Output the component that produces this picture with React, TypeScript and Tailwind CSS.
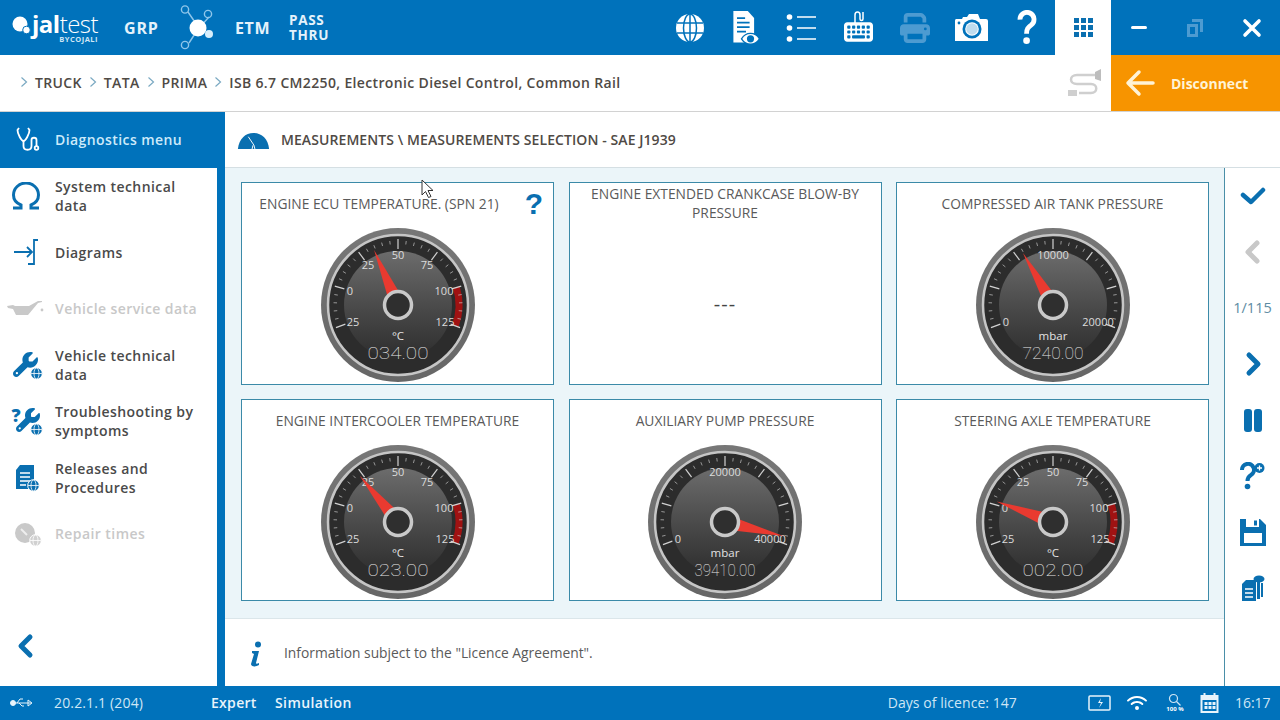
import { FaKeyboard, FaPrint, FaWifi, FaWrench } from "react-icons/fa6";

type GaugeProps = {
  id: string;
  labels: { text: string; x: number; y: number }[];
  angle: number;
  unit: string;
  value: string;
  redZone?: boolean;
};

const polar = (r: number, deg: number) => {
  const a = ((deg - 90) * Math.PI) / 180;
  return { x: 80 + r * Math.cos(a), y: 80 + r * Math.sin(a) };
};

function Gauge({ id, labels, angle, unit, value, redZone }: GaugeProps) {
  const ticks = Array.from({ length: 31 }, (_, i) => i);
  const zoneA = polar(61, 73);
  const zoneB = polar(61, 110);
  const tip = polar(60, angle);
  const baseL = polar(12, angle - 32);
  const baseR = polar(12, angle + 32);
  return (
    <svg width="160" height="160" viewBox="0 0 160 160" className="block">
      <defs>
        <linearGradient id={`${id}-ring`} x1="0" y1="0" x2="0" y2="1">
          <stop offset="0" stopColor="#777" />
          <stop offset="1" stopColor="#666" />
        </linearGradient>
        <linearGradient id={`${id}-disc`} x1="0" y1="0" x2="0" y2="1">
          <stop offset="0" stopColor="#6c6c6c" />
          <stop offset="0.55" stopColor="#484848" />
          <stop offset="1" stopColor="#2d2d2d" />
        </linearGradient>
      </defs>
      <circle cx="80" cy="80" r="77" fill={`url(#${id}-ring)`} />
      <circle cx="80" cy="80" r="70" fill="#2c2c2c" stroke="#c6c6c6" strokeWidth="2.500" />
      <circle cx="80" cy="80" r="54" fill={`url(#${id}-disc)`} />
      {redZone ? (
        <path
          d={`M${zoneA.x} ${zoneA.y} A61 61 0 0 1 ${zoneB.x} ${zoneB.y}`}
          fill="none"
          stroke="#a01212"
          strokeWidth="7"
        />
      ) : null}
      {ticks.map((i) => {
        const deg = -110 + (i * 220) / 30;
        const major = i % 5 === 0;
        const a = polar(major ? 56 : 61, deg);
        const b = polar(major ? 66 : 64.500, deg);
        return (
          <line
            key={i}
            x1={a.x}
            y1={a.y}
            x2={b.x}
            y2={b.y}
            stroke="#d2d2d2"
            strokeWidth={major ? 1.200 : 1}
            opacity={major ? 1 : 0.65}
          />
        );
      })}
      {labels.map((l) => (
        <text key={l.text + l.x} x={l.x} y={l.y} textAnchor="middle" fill="#dcdcdc" className="text-[11px]">
          {l.text}
        </text>
      ))}
      <polygon points={`${baseL.x},${baseL.y} ${baseR.x},${baseR.y} ${tip.x},${tip.y}`} fill="#e93a30" />
      <circle cx="80" cy="80" r="13.500" fill="#2f2f2f" stroke="#c9c9c9" strokeWidth="3.500" />
      <text x="80" y="115" textAnchor="middle" fill="#e2e2e2" className="text-[11.500px]">
        {unit}
      </text>
      <text
        x="80"
        y="134"
        textAnchor="middle"
        textLength={61}
        lengthAdjust="spacingAndGlyphs"
        fill="#e6e6e6"
        className="font-['Roboto'] text-[16px] font-thin"
      >
        {value}
      </text>
    </svg>
  );
}

const tempLabels = [
  { text: "25", x: 35, y: 101 },
  { text: "0", x: 32, y: 70 },
  { text: "25", x: 50, y: 44 },
  { text: "50", x: 80, y: 34 },
  { text: "75", x: 109, y: 44 },
  { text: "100", x: 126, y: 70 },
  { text: "125", x: 127, y: 101 },
];

const cards = [
  { title: "ENGINE ECU TEMPERATURE. (SPN 21)", labels: tempLabels, angle: -23.500, unit: "°C", value: "034.00", red: true, help: true },
  { title: "ENGINE EXTENDED CRANKCASE BLOW-BY PRESSURE" },
  {
    title: "COMPRESSED AIR TANK PRESSURE",
    labels: [
      { text: "0", x: 33, y: 101 },
      { text: "10000", x: 80, y: 34 },
      { text: "20000", x: 125, y: 101 },
    ],
    angle: -30,
    unit: "mbar",
    value: "7240.00",
  },
  { title: "ENGINE INTERCOOLER TEMPERATURE", labels: tempLabels, angle: -39.600, unit: "°C", value: "023.00", red: true },
  {
    title: "AUXILIARY PUMP PRESSURE",
    labels: [
      { text: "0", x: 33, y: 101 },
      { text: "20000", x: 80, y: 34 },
      { text: "40000", x: 125, y: 101 },
    ],
    angle: 103.500,
    unit: "mbar",
    value: "39410.00",
  },
  { title: "STEERING AXLE TEMPERATURE", labels: tempLabels, angle: -70, unit: "°C", value: "002.00", red: true },
];

function GlobeIcon() {
  return (
    <svg width="30" height="30" viewBox="0 0 30 30" fill="none" stroke="#0072bb" strokeWidth="1.500">
      <circle cx="15" cy="15" r="14" fill="#fff" stroke="none" />
      <ellipse cx="15" cy="15" rx="6.500" ry="14" />
      <path d="M2 10h26M2 20h26M15 1v28" />
    </svg>
  );
}

function DocEyeIcon() {
  return (
    <svg width="32" height="36" viewBox="0 0 32 40">
      <path d="M2 1h16l7 8v27H2z" fill="#fff" />
      <path d="M6 9h9M6 14h14M6 19h14M6 24h10" stroke="#0072bb" strokeWidth="2" />
      <path d="M11 32c5-8 15-8 20 0-5 8-15 8-20 0z" fill="#fff" stroke="#0072bb" strokeWidth="1.500" />
      <circle cx="21" cy="32" r="4" fill="#0072bb" />
    </svg>
  );
}

function ListIcon() {
  return (
    <svg width="32" height="30" viewBox="0 0 32 30" fill="#fff">
      <circle cx="3.500" cy="4" r="2.800" />
      <circle cx="3.500" cy="15" r="2.800" />
      <circle cx="3.500" cy="26" r="2.800" />
      <path d="M11 3.200h19v1.600H11zM11 14.200h19v1.600H11zM11 25.200h19v1.600H11z" />
    </svg>
  );
}

function CameraIcon() {
  return (
    <svg width="34" height="30" viewBox="0 0 34 30">
      <path d="M2 6h6l1-2h4l2-3h9l2 5h6a2 2 0 0 1 2 2v20H1V8a2 2 0 0 1 1-2z" fill="#fff" />
      <circle cx="18" cy="16" r="9.500" fill="#0072bb" />
      <circle cx="18" cy="16" r="6.800" fill="#fff" />
      <circle cx="18" cy="16" r="5.800" fill="#0072bb" opacity="0.25" />
      <circle cx="5" cy="10" r="1.400" fill="#0072bb" />
    </svg>
  );
}

function QuestionIcon() {
  return (
    <svg width="20" height="35" viewBox="0 0 22 40" fill="none" stroke="#fff" strokeWidth="5.500">
      <path d="M3 11a8 8 0 1 1 13 6c-4 3-5.500 4.500-5.500 10" />
      <circle cx="10.500" cy="35" r="3.800" fill="#fff" stroke="none" />
    </svg>
  );
}

function NetworkIcon() {
  return (
    <svg width="36" height="46" viewBox="0 0 36 46" fill="none">
      <path d="M8 7l11 16M29 12l-10 11M9 38l9-14" stroke="#8fc6ea" strokeWidth="1.400" />
      <circle cx="5" cy="4.500" r="3.600" stroke="#8fc6ea" strokeWidth="1.400" />
      <circle cx="28" cy="9" r="3.600" stroke="#8fc6ea" strokeWidth="1.400" />
      <circle cx="5" cy="40" r="3.600" stroke="#8fc6ea" strokeWidth="1.400" />
      <circle cx="18" cy="23" r="8.500" fill="#fff" />
      <circle cx="29" cy="29" r="4" fill="#d7eefb" />
    </svg>
  );
}

function GlobeBadge({ color }: { color: string }) {
  return (
    <svg width="13" height="13" viewBox="0 0 13 13" fill="none" stroke="#fff" strokeWidth="0.800" className="absolute -bottom-[1px] -right-[3px]">
      <circle cx="6.500" cy="6.500" r="5.800" fill={color} strokeWidth="1" />
      <ellipse cx="6.500" cy="6.500" rx="2.500" ry="5.500" />
      <path d="M1 6.500h11" />
    </svg>
  );
}

function Chevron({ dir, color, size = 26 }: { dir: "left" | "right"; color: string; size?: number }) {
  return (
    <svg width={size} height={size} viewBox="0 0 26 26" fill="none" stroke={color} strokeWidth="5" strokeLinejoin="round" strokeLinecap="round">
      <path d={dir === "left" ? "M17 4l-9 9 9 9" : "M9 4l9 9-9 9"} />
    </svg>
  );
}

function Crumb({ label }: { label: string }) {
  return (
    <>
      <svg width="8" height="12" viewBox="0 0 8 12" fill="none" stroke="#7aa9c2" strokeWidth="1.200">
        <path d="M1.500 1.500l5 4.500-5 4.500" />
      </svg>
      <span>{label}</span>
    </>
  );
}

const B = "#0a6fb0";

const sideItems = [
  {
    label: ["System technical", "data"],
    icon: (
      <svg width="30" height="28" viewBox="0 0 30 28" fill="none" stroke={B} strokeWidth="3">
        <path d="M2 26h8v-3C5 21 2.500 17 2.500 13a12.500 12 0 0 1 25 0c0 4-2.500 8-7.500 10v3h8" />
      </svg>
    ),
  },
  {
    label: ["Diagrams"],
    icon: (
      <svg width="26" height="26" viewBox="0 0 26 26" fill="none" stroke={B} strokeWidth="1.800">
        <path d="M1 13h18M14 8l5 5-5 5M25 1h-4v24h-6" />
      </svg>
    ),
  },
  {
    label: ["Vehicle service data"],
    disabled: true,
    icon: (
      <svg width="38" height="18" viewBox="0 0 38 18" fill="#c9c9c9">
        <path d="M0 6l6-1 2 1h14l9-5h4v1l-4 1-10 12H9L6 9 1 8z" />
        <circle cx="35" cy="10" r="1.400" />
      </svg>
    ),
  },
  {
    label: ["Vehicle technical", "data"],
    icon: (
      <div className="relative h-[27px] w-[27px]">
        <FaWrench className="h-[25px] w-[25px]" color={B} />
        <GlobeBadge color={B} />
      </div>
    ),
  },
  {
    label: ["Troubleshooting by", "symptoms"],
    icon: (
      <div className="relative h-[27px] w-[27px]">
        <span className="absolute -left-[1px] -top-[6px] text-[18px] font-extrabold text-[#0a6fb0]">?</span>
        <FaWrench className="ml-[3px] h-[24px] w-[24px]" color={B} />
        <GlobeBadge color={B} />
      </div>
    ),
  },
  {
    label: ["Releases and", "Procedures"],
    icon: (
      <div className="relative h-[27px] w-[22px]">
        <svg width="20" height="26" viewBox="0 0 20 26">
          <path d="M5 1h14v24H1V6z" fill={B} />
          <path d="M5 9h10M5 13h10M5 17h10M5 21h6" stroke="#fff" strokeWidth="1.500" />
        </svg>
        <GlobeBadge color={B} />
      </div>
    ),
  },
  {
    label: ["Repair times"],
    disabled: true,
    icon: (
      <div className="relative h-[25px] w-[25px]">
        <svg width="22" height="22" viewBox="0 0 22 22">
          <circle cx="11" cy="12" r="10" fill="#c9c9c9" />
          <path d="M7 8l6 6" stroke="#eee" strokeWidth="2" />
        </svg>
        <GlobeBadge color="#d0d0d0" />
      </div>
    ),
  },
];

export default function App() {
  return (
    <div className="flex h-[720px] w-[1280px] flex-col overflow-hidden bg-white font-['Open_Sans',sans-serif] text-[14px] text-[#4a4a4a]">
      {/* top bar */}
      <div className="flex h-[55px] shrink-0 items-center bg-[#0072bb] text-white">
        <div className="flex w-[124px] shrink-0 items-center pl-[12px]">
          <svg width="19" height="20" viewBox="0 0 19 20" className="-mt-[5px]">
            <circle cx="8" cy="9" r="7.500" fill="#fff" />
            <circle cx="14.500" cy="15" r="3.800" fill="#fff" stroke="#0072bb" />
          </svg>
          <div className="ml-[1px] flex flex-col items-end leading-none">
            <span className="text-[24px] leading-[22px] tracking-[-0.5px]">
              <span className="font-bold">jal</span>
              <span className="font-light">test</span>
            </span>
            <span className="text-[7.500px] font-bold leading-[8px] tracking-[0.5px] text-[#cfe6f5]">BYCOJALI</span>
          </div>
        </div>
        <span className="w-[56px] text-[16px] font-bold tracking-[0.8px] text-[#e4f2fb]">GRP</span>
        <div className="w-[55px]">
          <NetworkIcon />
        </div>
        <span className="w-[54px] text-[16px] font-bold tracking-[0.6px] text-[#e4f2fb]">ETM</span>
        <span className="text-[13.500px] font-bold leading-[15px] tracking-[0.7px] text-[#e4f2fb]">
          PASS
          <br />
          THRU
        </span>
        <div className="ml-auto flex items-center">
          <div className="flex w-[56px] justify-center">
            <GlobeIcon />
          </div>
          <div className="flex w-[56px] justify-center">
            <DocEyeIcon />
          </div>
          <div className="flex w-[56px] justify-center">
            <ListIcon />
          </div>
          <div className="relative flex w-[56px] justify-center pt-[8px]">
            <FaKeyboard className="h-[26px] w-[29px]" />
            <svg width="14" height="12" viewBox="0 0 14 12" fill="none" stroke="#fff" strokeWidth="1.500" className="absolute left-[24px] top-[0px]">
              <path d="M1 12V4c0-4 5-4 5 0v4c0 2 3 2 3 0V1" />
            </svg>
          </div>
          <div className="flex w-[57px] justify-center">
            <FaPrint className="h-[30px] w-[36px] text-[#4d9bd1]" />
          </div>
          <div className="flex w-[56px] justify-center">
            <CameraIcon />
          </div>
          <div className="flex w-[56px] justify-center">
            <QuestionIcon />
          </div>
        </div>
        <div className="flex h-full w-[56px] shrink-0 items-center justify-center bg-white">
          <div className="grid grid-cols-3 gap-[2px]">
            {Array.from({ length: 9 }, (_, i) => (
              <span key={i} className="h-[5px] w-[5px] bg-[#0a6fb0]" />
            ))}
          </div>
        </div>
        <div className="flex w-[56px] justify-center">
          <span className="h-[3px] w-[16px] rounded bg-white" />
        </div>
        <div className="flex w-[56px] justify-center">
          <svg width="18" height="20" viewBox="0 0 18 20" fill="#4d9bd1">
            <path d="M6 1h11v13h-3V4H6z" />
            <path d="M1 6h11v13H1zM4 9v7h5V9z" fillRule="evenodd" />
          </svg>
        </div>
        <div className="flex w-[57px] justify-center">
          <svg width="20" height="20" viewBox="0 0 20 20" stroke="#fff" strokeWidth="3.600" strokeLinecap="round">
            <path d="M3 3l14 14M17 3L3 17" />
          </svg>
        </div>
      </div>

      {/* breadcrumb */}
      <div className="flex h-[57px] shrink-0 items-center border-b border-[#d2d2d2] pl-[20px] font-semibold tracking-[0.35px] text-[#4f4a45]">
        <div className="-mt-[2px] flex items-center gap-[7px]">
          <Crumb label="TRUCK" />
          <Crumb label="TATA" />
          <Crumb label="PRIMA" />
          <Crumb label="ISB 6.7 CM2250, Electronic Diesel Control, Common Rail" />
        </div>
        <div className="ml-auto flex h-[56px] items-center">
          <svg width="36" height="32" viewBox="0 0 36 32" fill="none" stroke="#cfcfcf" strokeWidth="2.500" className="mr-[8px]">
            <path d="M28 8H10C2 8 2 17 10 17h14c7 0 7 9 0 9H12" />
            <path d="M28 5l6-3v12l-6-2z" fill="#bdbdbd" stroke="none" />
            <path d="M1 23h9v6H1z" fill="#cfcfcf" stroke="none" />
          </svg>
          <div className="flex h-full w-[169px] items-center bg-[#f79400] pl-[14px] text-[14px] font-bold tracking-normal text-[#fff3d6]">
            <svg width="30" height="28" viewBox="0 0 30 28" fill="none" stroke="#fff3d6" strokeWidth="3.500" strokeLinecap="round" strokeLinejoin="round">
              <path d="M28 14H3M14 3L3 14l11 11" />
            </svg>
            <span className="ml-[16px]">Disconnect</span>
          </div>
        </div>
      </div>

      {/* middle */}
      <div className="flex min-h-0 flex-1">
        <div className="flex w-[225px] shrink-0 flex-col font-semibold tracking-[0.42px]">
          <div className="flex h-[56px] shrink-0 items-center bg-[#0072bb] pb-[2px] text-[#cdeafa]">
            <div className="flex w-[55px] justify-center">
              <svg width="24" height="26" viewBox="0 0 24 26" fill="none" stroke="#fff" strokeWidth="1.800">
                <path d="M3 2L1.500 4c0 4 4 11 6 11s6-7 6-11L12 2" />
                <path d="M7.500 15v5c0 5 8 5 8 0v-6c0-3 5-3 5 0v6" />
                <circle cx="20.500" cy="22" r="1.800" />
              </svg>
            </div>
            <span>Diagnostics menu</span>
          </div>
          <div className="flex min-h-0 flex-1 flex-col border-r-[8px] border-[#0072bb]">
            {sideItems.map((item) => (
              <div key={item.label[0]} className="flex h-[56.300px] shrink-0 items-center">
                <div className="flex w-[55px] shrink-0 justify-center pr-[3px]">{item.icon}</div>
                <span className={item.disabled ? "leading-[19px] text-[#c8c8c8]" : "leading-[19px] text-[#4a4a4a]"}>
                  {item.label.map((line) => (
                    <span key={line} className="block whitespace-nowrap">
                      {line}
                    </span>
                  ))}
                </span>
              </div>
            ))}
            <div className="mt-auto flex h-[80px] items-center pl-[13px]">
              <Chevron dir="left" color={B} />
            </div>
          </div>
        </div>

        <div className="flex min-w-0 flex-1 flex-col">
          <div className="flex h-[56px] shrink-0 items-center border-b border-[#d5dfe3] pl-[12px] font-semibold tracking-[0.08px] text-[#4f4a45]">
            <svg width="33" height="17" viewBox="0 0 33 18" className="mt-[2px]">
              <path d="M0 18C1 7 8 1 16.500 1S32 7 33 18z" fill="#0a6fb0" />
              <path d="M11 5l6 9 1 4M16 14l-1 4" stroke="#fff" strokeWidth="1" fill="none" />
            </svg>
            <span className="ml-[11px]">MEASUREMENTS \ MEASUREMENTS SELECTION - SAE J1939</span>
          </div>
          <div className="flex min-h-0 flex-1">
            <div className="relative flex w-[999px] flex-col bg-[#ebf5f9]">
              <div className="grid grid-cols-3 grid-rows-[203px_202px] gap-x-[14.500px] gap-y-[14px] pl-[16px] pr-[15px] pt-[14px]">
                {cards.map((c, i) => (
                  <div key={c.title} className="relative flex flex-col border border-[#3b8aa8] bg-white">
                    <div
                      className={
                        c.help
                          ? "flex h-[40px] shrink-0 items-center justify-center pl-[10px] pr-[47px] text-center text-[13.800px] leading-[19px] text-[#5a5a5a]"
                          : "flex h-[40px] shrink-0 items-center justify-center px-[15px] text-center text-[13.800px] leading-[19px] text-[#5a5a5a]"
                      }
                    >
                      {c.title}
                    </div>
                    {c.labels ? (
                      <div className="mt-[2px] flex justify-center">
                        <Gauge id={`g${i}`} labels={c.labels} angle={c.angle} unit={c.unit} value={c.value} redZone={c.red} />
                      </div>
                    ) : (
                      <div className="flex flex-1 items-center justify-center text-[20px] tracking-[1px] text-[#444]">---</div>
                    )}
                    {c.help ? (
                      <span className="absolute right-[10px] top-[3px] font-['Liberation_Sans'] text-[30px] font-bold leading-[36px] text-[#0a6fb0]">
                        ?
                      </span>
                    ) : null}
                  </div>
                ))}
              </div>
              <div className="mt-auto flex h-[68px] items-center border-t border-[#dbe6ea] bg-white pl-[23px] pt-[2px] text-[13.800px] text-[#5a5a5a]">
                <svg width="16" height="26" viewBox="0 0 16 26" fill={B}>
                  <circle cx="10" cy="3.500" r="3" />
                  <path d="M4 10h7l-3 12c0 1 1 1 3 0v2c-3 2-8 2-8-1l3-10-2-1z" />
                </svg>
                <span className="ml-[20px]">Information subject to the "Licence Agreement".</span>
              </div>
              <svg width="13" height="20" viewBox="0 0 13 20" className="absolute left-[196px] top-[11px]">
                <path d="M1 1v15l3.500-3.500 3 6 2.500-1-3-6h5z" fill="#fff" stroke="#333" strokeWidth="1" />
              </svg>
            </div>
            <div className="flex w-[56px] flex-col items-center border-l border-[#4a8fa8] bg-white">
              <div className="flex h-[56px] items-center">
                <svg width="26" height="20" viewBox="0 0 26 20" fill="none" stroke={B} strokeWidth="4.500" strokeLinecap="round" strokeLinejoin="round">
                  <path d="M3 9l8 7L23 4" />
                </svg>
              </div>
              <div className="flex h-[56px] items-center">
                <Chevron dir="left" color="#c8c8c8" />
              </div>
              <div className="flex h-[56px] items-center whitespace-nowrap text-[14.500px] text-[#5d8ba3]">1/115</div>
              <div className="flex h-[56px] items-center">
                <Chevron dir="right" color={B} />
              </div>
              <div className="flex h-[56px] items-center gap-[2px]">
                <span className="h-[23px] w-[8px] rounded-[3px] bg-[#0a6fb0]" />
                <span className="h-[23px] w-[8px] rounded-[3px] bg-[#0a6fb0]" />
              </div>
              <div className="flex h-[56px] items-center">
                <svg width="25" height="28" viewBox="0 0 25 28" fill="none" stroke={B} strokeWidth="4">
                  <path d="M2 8a6 6 0 1 1 9 5c-2.500 1.500-3.500 3-3.500 6" />
                  <circle cx="7.500" cy="24.500" r="2.800" fill={B} stroke="none" />
                  <circle cx="19.500" cy="6" r="5" fill={B} stroke="none" />
                  <path d="M17 6h5M19.500 3.500v5" stroke="#fff" strokeWidth="1.300" />
                </svg>
              </div>
              <div className="flex h-[56px] items-center">
                <svg width="26" height="27" viewBox="0 0 26 27">
                  <path d="M0 0h20l6 6v21H0z" fill={B} />
                  <path d="M6 0h13v8H6z" fill="#fff" />
                  <path d="M14 1.500h3v5h-3z" fill={B} />
                  <path d="M4 14h18v10H4z" fill="#fff" />
                </svg>
              </div>
              <div className="flex h-[56px] items-center">
                <svg width="24" height="27" viewBox="0 0 24 27">
                  <path d="M1 9l4-4h10v21H1z" fill={B} />
                  <path d="M4 14h8M4 18h8M4 22h8" stroke="#fff" strokeWidth="1.500" />
                  <path d="M16 6h3v18h-3zM20 8h2v14h-2z" fill={B} />
                  <ellipse cx="18" cy="4" rx="5.500" ry="3.500" fill={B} />
                </svg>
              </div>
            </div>
          </div>
        </div>
      </div>

      {/* status bar */}
      <div className="flex h-[34px] shrink-0 items-center bg-[#0072bb] pb-[1px] text-[#cfe6f5]">
        <svg width="24" height="12" viewBox="0 0 24 12" fill="#e8f4fb" stroke="#e8f4fb" className="ml-[10px]">
          <circle cx="3" cy="6" r="2.500" />
          <path d="M3 6h18M18 3l4 3-4 3zM7 6l3-4h3M9 6l3 3h2" fill="none" />
        </svg>
        <span className="ml-[20px] w-[157px] tracking-[0.15px]">20.2.1.1 (204)</span>
        <span className="w-[64px] font-semibold tracking-[0.3px] text-[#e8f4fb]">Expert</span>
        <span className="font-semibold tracking-[0.4px] text-[#e8f4fb]">Simulation</span>
        <span className="ml-[536px] tracking-[0.05px]">Days of licence: 147</span>
        <svg width="24" height="16" viewBox="0 0 24 16" fill="none" stroke="#e8f4fb" strokeWidth="1.500" className="ml-[71px]">
          <rect x="1" y="1" width="21" height="14" rx="1" />
          <path d="M13 3l-3 5h3l-2 5 4-6h-3z" fill="#e8f4fb" stroke="none" />
        </svg>
        <FaWifi className="ml-[15px] h-[16px] w-[20px] text-white" />
        <div className="ml-[15px] flex w-[26px] flex-col items-center">
          <svg width="13" height="13" viewBox="0 0 13 13" fill="none" stroke="#cfe6f5" strokeWidth="1.200">
            <circle cx="5.500" cy="5.500" r="4" />
            <path d="M8.500 8.500l4 4" />
          </svg>
          <span className="text-[6px] font-bold leading-[7px] text-white">100 %</span>
        </div>
        <svg width="21" height="22" viewBox="0 0 20 22" fill="#e8f4fb" className="ml-[11px]">
          <path d="M1 3h3V1h2v2h8V1h2v2h3v18H1zM3 8v11h14V8z" fillRule="evenodd" />
          <path d="M5 10h3v3H5zM9 10h3v3H9zM13 10h3v3h-3zM5 14h3v3H5zM9 14h3v3H9zM13 14h3v3h-3z" />
        </svg>
        <span className="ml-[15px]">16:17</span>
      </div>
    </div>
  );
}
